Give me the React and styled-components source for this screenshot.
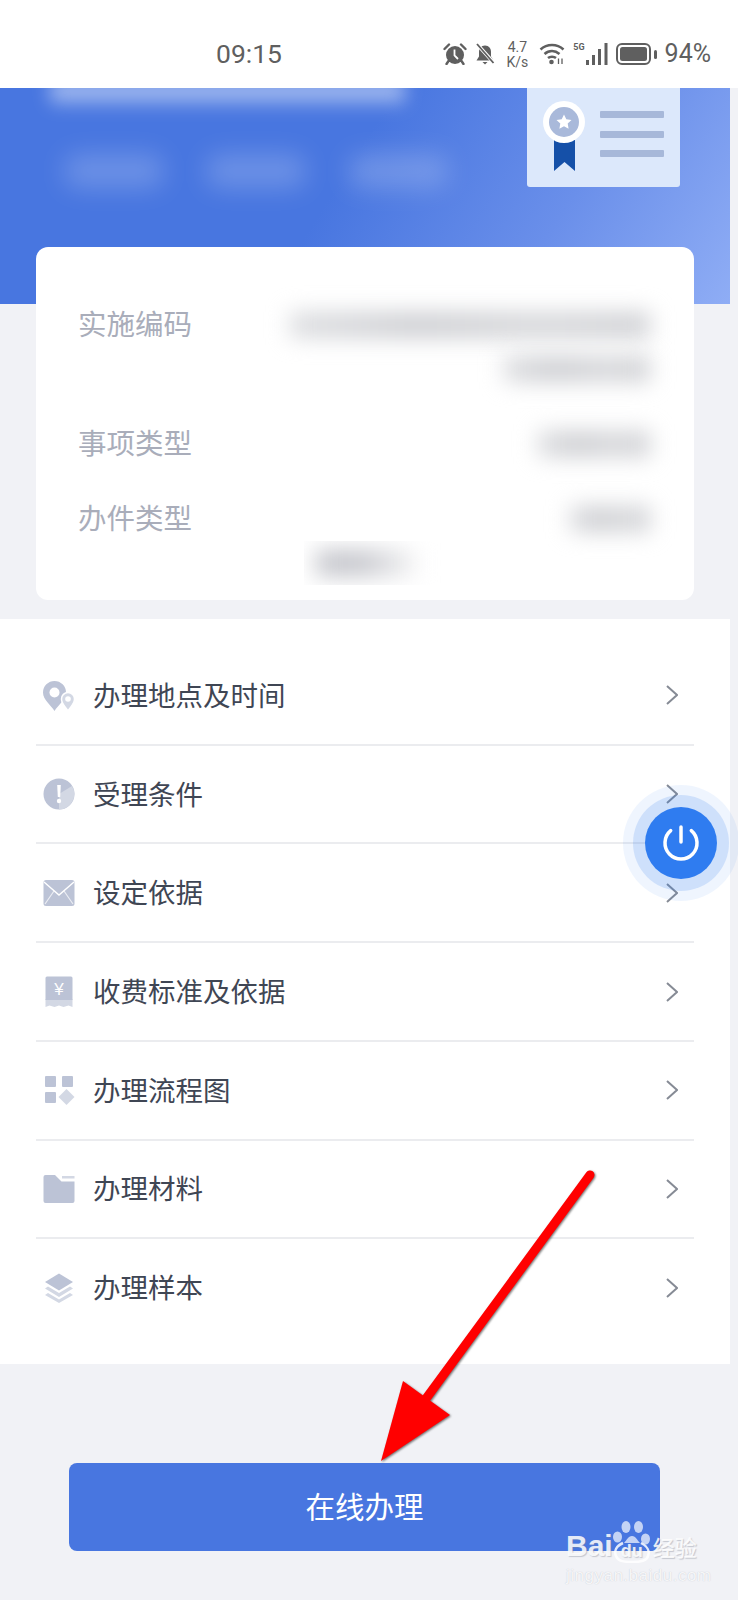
import styled, { createGlobalStyle } from "styled-components"

const GlobalStyle = createGlobalStyle`
  html, body {
    margin: 0;
    padding: 0;
    background: #f1f2f6;
  }
  body {
    font-family: "Noto Sans CJK SC", "Noto Sans", sans-serif;
  }
`

const GREY = "#5f5f5f"
const ICON = "#bcc3d6"
const ICON_LIGHT = "#d3d8e4"

const rows = [
  { label: "办理地点及时间", icon: <PinIcon /> },
  { label: "受理条件", icon: <AlertIcon /> },
  { label: "设定依据", icon: <MailIcon /> },
  { label: "收费标准及依据", icon: <ReceiptIcon /> },
  { label: "办理流程图", icon: <FlowIcon /> },
  { label: "办理材料", icon: <FolderIcon /> },
  { label: "办理样本", icon: <LayersIcon /> },
]

function PinIcon() {
  return (
    <svg width="32" height="32" viewBox="0 0 32 32">
      <path d="M11.500 32 C8 26 0 21 0 13.500 A11.500 11.500 0 0 1 23 13.500 C23 21 15 26 11.500 32 Z" fill={ICON} />
      <circle cx="11.500" cy="13.500" r="5" fill="#fff" />
      <path d="M25 32 C23 28 18.500 25.500 18.500 20 A6.500 6.500 0 0 1 31.500 20 C31.500 25.500 27 28 25 32 Z" fill={ICON_LIGHT} stroke="#fff" strokeWidth="1.500" />
      <circle cx="25" cy="20" r="2.800" fill="#fff" />
    </svg>
  )
}

function AlertIcon() {
  return (
    <svg width="32" height="32" viewBox="0 0 32 32">
      <circle cx="16" cy="16" r="15.500" fill={ICON} />
      <path d="M16 31.500 A15.500 15.500 0 0 0 29 8 L16 16 Z" fill={ICON_LIGHT} />
      <path d="M14.200 7 h3.600 l-.6 12 h-2.400 z" fill="#fff" />
      <circle cx="16" cy="23" r="2.200" fill="#fff" />
    </svg>
  )
}

function MailIcon() {
  return (
    <svg width="32" height="32" viewBox="0 0 32 32">
      <rect x="0.500" y="3" width="31" height="26" rx="2.500" fill={ICON} />
      <path d="M1 5 L16 18 L31 5" fill="none" stroke="#fff" strokeWidth="1.400" />
      <path d="M2 27 L11 14 M30 27 L21 14" stroke="#fff" strokeWidth="1.200" opacity="0.7" />
    </svg>
  )
}

function ReceiptIcon() {
  return (
    <svg width="32" height="32" viewBox="0 0 32 32">
      <path d="M2.500 23 H29.500 V31 l-4 -1.400 -5 1.400 -4.500 -1.400 -4.500 1.400 -5 -1.400 -4 1.400 Z" fill={ICON_LIGHT} />
      <path d="M4 0.500 H28 a1.500 1.500 0 0 1 1.500 1.500 V24 H2.500 V2 A1.500 1.500 0 0 1 4 .5 Z" fill={ICON} />
      <text x="16" y="19" textAnchor="middle" fontSize="17" fontFamily="Liberation Sans, sans-serif" fill="#fff">¥</text>
    </svg>
  )
}

function FlowIcon() {
  return (
    <svg width="32" height="32" viewBox="0 0 32 32">
      <rect x="2" y="2" width="11" height="11" rx="1" fill={ICON} />
      <rect x="19" y="2" width="11" height="11" rx="1" fill={ICON} />
      <rect x="2" y="18" width="11" height="11" rx="1" fill={ICON} />
      <path d="M23.500 15 L31.500 23 L23.500 31 L15.500 23 Z" fill={ICON_LIGHT} />
    </svg>
  )
}

function FolderIcon() {
  return (
    <svg width="32" height="32" viewBox="0 0 32 32">
      <path d="M2.500 2 H12 L18.500 8.500 H31.500 V28 A2 2 0 0 1 29.500 30 H2.500 A2 2 0 0 1 .5 28 V4 A2 2 0 0 1 2.500 2 Z" fill={ICON} />
      <rect x="19" y="3" width="12.500" height="2.500" fill={ICON_LIGHT} />
    </svg>
  )
}

function LayersIcon() {
  return (
    <svg width="32" height="32" viewBox="0 0 32 32">
      <path d="M16 1.500 L30 10 L16 18.500 L2 10 Z" fill={ICON} />
      <path d="M5 14.500 L2 16.500 L16 25 L30 16.500 L27 14.500 L16 21 Z" fill={ICON_LIGHT} />
      <path d="M5 21 L2 23 L16 31 L30 23 L27 21 L16 27.500 Z" fill={ICON_LIGHT} />
    </svg>
  )
}

const App = () => {
  return (
    <Page>
      <GlobalStyle />

      <StatusBar>
        <Clock>09:15</Clock>
        <StatusIcons>
          <svg width="24" height="22" viewBox="0 0 24 22">
            <circle cx="12" cy="12" r="9" fill={GREY} />
            <path d="M1.500 6 L6 1.500 M22.500 6 L18 1.500 M5.500 18 L3.500 21 M18.500 18 L20.500 21" stroke={GREY} strokeWidth="2.400" strokeLinecap="round" />
            <path d="M11.500 6.500 V12.500 L15 16" fill="none" stroke="#fff" strokeWidth="1.800" />
          </svg>
          <svg width="20" height="22" viewBox="0 0 20 22">
            <path d="M10 2.500 C6 2.500 4 5.500 4 9 V13.500 L1.500 17.500 H18.500 L16 13.500 V9 C16 5.500 14 2.500 10 2.500 Z" fill={GREY} />
            <path d="M7.500 19 H12.500 L10 21.500 Z" fill={GREY} />
            <path d="M1.500 .5 L19 20" stroke="#fff" strokeWidth="3.500" />
            <path d="M2 1 L18.500 20" stroke={GREY} strokeWidth="1.800" />
          </svg>
          <Speed>
            <SpeedLine>4.7</SpeedLine>
            <SpeedLine>K/s</SpeedLine>
          </Speed>
          <svg width="26" height="22" viewBox="0 0 26 22">
            <path d="M1.500 6.500 C8 .5 18 .5 24.500 6.500 M5.500 11 C10 7 16 7 20.500 11 M9 15 C11 13.300 15 13.300 17 15" fill="none" stroke={GREY} strokeWidth="2.500" />
            <circle cx="12.500" cy="19" r="2.300" fill={GREY} />
            <path d="M19.500 21 V15.500 M23 21 V15.500" stroke={GREY} strokeWidth="1.300" />
          </svg>
          <SignalGroup>
            <FiveG>5G</FiveG>
            <svg width="23" height="22" viewBox="0 0 23 22">
              <rect x="1" y="17" width="3" height="5" fill={GREY} />
              <rect x="7" y="12" width="3" height="10" fill={GREY} />
              <rect x="13" y="6" width="3" height="16" fill={GREY} />
              <rect x="19.500" y="0" width="3" height="22" fill={GREY} />
            </svg>
          </SignalGroup>
          <svg width="41" height="22" viewBox="0 0 41 22">
            <rect x="1" y="1" width="33" height="20" rx="5" fill="none" stroke={GREY} strokeWidth="2" />
            <rect x="4" y="4" width="27" height="14" rx="2.500" fill={GREY} />
            <rect x="38" y="7" width="3" height="9" rx="1.500" fill={GREY} />
          </svg>
          <Percent>94%</Percent>
        </StatusIcons>
      </StatusBar>

      <Banner>
        <BannerText>
          <TitleBlur />
          <ChipRow>
            <ChipBlur />
            <ChipBlur />
            <ChipBlur />
          </ChipRow>
        </BannerText>
        <svg width="153" height="99" viewBox="0 0 153 99">
          <path d="M0 0 H153 V96 a3 3 0 0 1 -3 3 H3 a3 3 0 0 1 -3 -3 Z" fill="#dce8fb" />
          <path d="M27 52 H48 V83 L37.500 74 L27 83 Z" fill="#1550a8" />
          <circle cx="37" cy="34" r="21" fill="#fff" />
          <circle cx="37" cy="34" r="15" fill="#a9b9da" />
          <path d="M37 26.500 l2.300 4.800 5.200 .7 -3.800 3.600 .9 5.200 -4.600 -2.500 -4.600 2.500 .9 -5.200 -3.800 -3.600 5.200 -.7 Z" fill="#fff" />
          <rect x="73" y="23" width="64" height="7" rx="1" fill="#a7b8d9" />
          <rect x="73" y="43" width="64" height="7" rx="1" fill="#a7b8d9" />
          <rect x="73" y="62" width="64" height="7" rx="1" fill="#a7b8d9" />
        </svg>
      </Banner>

      <InfoCard>
        <InfoRow $tall>
          <InfoLabel>实施编码</InfoLabel>
          <InfoValue>
            <ValueBlur $width={360} />
            <ValueBlur $width={146} />
          </InfoValue>
        </InfoRow>
        <InfoRow>
          <InfoLabel>事项类型</InfoLabel>
          <InfoValue>
            <ValueBlur $width={112} />
          </InfoValue>
        </InfoRow>
        <InfoRow $tall>
          <InfoLabel>办件类型</InfoLabel>
          <InfoValue>
            <ValueBlur $width={80} />
            <ValueClip>
              <ValueBlur $width={100} $fade />
            </ValueClip>
          </InfoValue>
        </InfoRow>
      </InfoCard>

      <MenuList>
        {rows.map((row) => (
          <MenuRow key={row.label}>
            <IconSlot>{row.icon}</IconSlot>
            <MenuLabel>{row.label}</MenuLabel>
            <svg width="12" height="20" viewBox="0 0 12 20">
              <path d="M1 1 L11 10 L1 19" fill="none" stroke="#868b95" strokeWidth="2" />
            </svg>
          </MenuRow>
        ))}
      </MenuList>

      <Footer>
        <ActionButton>在线办理</ActionButton>
      </Footer>

      <FloatButton>
        <svg width="40" height="40" viewBox="0 0 40 40">
          <path d="M30.300 7.700 A16 16 0 1 1 9.700 7.700" fill="none" stroke="#fff" strokeWidth="3.500" strokeLinecap="round" />
          <path d="M20 4 V19" stroke="#fff" strokeWidth="3.500" strokeLinecap="round" />
        </svg>
      </FloatButton>

      <Arrow viewBox="0 0 240 310" width="240" height="310">
        <path d="M225 15 L60 240" stroke="#ff0000" strokeWidth="9" strokeLinecap="round" />
        <path d="M16 301 L38 221 L85 255 Z" fill="#ff0000" />
      </Arrow>

      <Watermark>
        <LogoLine>
          <BaiText>Bai</BaiText>
          <PawMark>
            <svg width="38" height="42" viewBox="0 0 38 42">
              <g fill="#fff" fillOpacity="0.68">
                <ellipse cx="4.500" cy="16" rx="4.500" ry="5.500" />
                <ellipse cx="13" cy="6" rx="4.500" ry="6" />
                <ellipse cx="25.500" cy="6" rx="4.500" ry="6" />
                <ellipse cx="32.500" cy="18" rx="4.500" ry="5.500" />
                <path d="M19 15 C23 15 24 19 27 22 L11 22 C14 19 15 15 19 15 Z" />
              </g>
              <path d="M10 22 C3 25 1 30 3 35 C5 40 10 41 19 41 C28 41 34 40 35 35 C37 30 34 25 28 22" fill="none" stroke="#fff" strokeOpacity="0.85" strokeWidth="2.500" />
            </svg>
            <DuText>du</DuText>
          </PawMark>
          <JingyanText>经验</JingyanText>
        </LogoLine>
        <SiteText>jingyan.baidu.com</SiteText>
      </Watermark>
    </Page>
  )
}

const Page = styled.div`
  position: relative;
  width: 738px;
  height: 1600px;
  overflow: hidden;
  background: #f1f2f6;
`

const StatusBar = styled.div`
  display: flex;
  align-items: center;
  justify-content: space-between;
  height: 88px;
  padding: 20px 27px 0 216px;
  box-sizing: border-box;
  background: #fff;
  color: ${GREY};
  font-family: Roboto, "Liberation Sans", sans-serif;
`

const Clock = styled.div`
  font-size: 26.5px;
  line-height: 32px;
`

const StatusIcons = styled.div`
  display: flex;
  align-items: center;
  gap: 8px;
`

const Speed = styled.div`
  display: flex;
  flex-direction: column;
  align-items: center;
  margin: 0 3px;
`

const SpeedLine = styled.div`
  font-size: 14px;
  line-height: 16.5px;
  margin-bottom: -1px;
`

const SignalGroup = styled.div`
  display: flex;
  align-items: flex-start;
`

const FiveG = styled.span`
  font-size: 9px;
  font-weight: 700;
  line-height: 9px;
`

const Percent = styled.div`
  font-size: 25px;
  line-height: 32px;
`

const Banner = styled.div`
  display: flex;
  justify-content: space-between;
  align-items: flex-start;
  width: 730px;
  height: 216px;
  padding: 0 50px;
  box-sizing: border-box;
  overflow: hidden;
  background: linear-gradient(122deg, #4876e0 46%, #6a8fea 74%, #8fadf5 100%);
`

const BannerText = styled.div`
  display: flex;
  flex-direction: column;
  gap: 48px;
  width: 430px;
`

const TitleBlur = styled.div`
  width: 355px;
  height: 24px;
  margin-top: -6px;
  background: linear-gradient(180deg, rgba(255, 255, 255, 0.7), rgba(255, 255, 255, 0.18));
  filter: blur(9px);
`

const ChipRow = styled.div`
  display: flex;
  gap: 42px;
  padding-left: 14px;
`

const ChipBlur = styled.div`
  flex: none;
  width: 100px;
  height: 34px;
  background: rgba(255, 255, 255, 0.2);
  border-radius: 14px;
  filter: blur(13px);
`

const InfoCard = styled.section`
  position: relative;
  display: flex;
  flex-direction: column;
  gap: 31px;
  width: 658px;
  height: 353px;
  margin: -57px 0 19px 36px;
  padding: 56px 44px 0 42px;
  box-sizing: border-box;
  background: #fff;
  border-radius: 12px;
`

const InfoRow = styled.div`
  display: flex;
  justify-content: space-between;
  height: ${(p) => (p.$tall ? 88 : 44)}px;
`

const InfoLabel = styled.div`
  margin-top: -2px;
  font-size: 28.5px;
  line-height: 44px;
  color: #a9adba;
`

const InfoValue = styled.div`
  display: flex;
  flex-direction: column;
  align-items: flex-end;
  width: 360px;
`

const ValueBlur = styled.div`
  flex: none;
  width: ${(p) => p.$width}px;
  height: 26px;
  margin: 9px 0;
  background: ${(p) =>
    p.$fade
      ? "linear-gradient(90deg, #c4c5cb 0%, #c4c5cb 45%, #f4f4f5 100%)"
      : "linear-gradient(90deg, #dcdde0, #cdced2 35%, #d6d7da 70%, #cfd0d4)"};
  filter: blur(11px);
`

const ValueClip = styled.div`
  align-self: flex-start;
  width: 130px;
  height: 44px;
  margin-left: 14px;
  padding-left: 12px;
  overflow: hidden;
`

const MenuList = styled.div`
  display: flex;
  flex-direction: column;
  width: 730px;
  height: 745px;
  padding: 28px 36px;
  box-sizing: border-box;
  background: #fff;
`

const MenuRow = styled.div`
  display: flex;
  align-items: center;
  flex: 1;
  padding: 0 16px 0 7px;
  border-bottom: 2px solid #ebecef;

  &:last-child {
    border-bottom: none;
  }
`

const IconSlot = styled.div`
  display: flex;
  width: 32px;
  height: 32px;
  margin-right: 18px;
`

const MenuLabel = styled.div`
  flex: 1;
  margin-top: -3px;
  font-size: 27.5px;
  line-height: 40px;
  color: #3f4654;
`

const Footer = styled.div`
  padding: 99px 0 0 69px;
`

const ActionButton = styled.button`
  display: block;
  width: 591px;
  height: 88px;
  padding: 0 0 4px;
  border: none;
  border-radius: 8px;
  background: #4876e0;
  color: #fff;
  font-family: inherit;
  font-size: 29.5px;
`

const FloatButton = styled.div`
  position: absolute;
  left: 645px;
  top: 807px;
  display: flex;
  align-items: center;
  justify-content: center;
  width: 72px;
  height: 72px;
  border-radius: 50%;
  background: #2f7cf0;
  box-shadow: 0 0 0 12px rgba(47, 124, 240, 0.17), 0 0 0 22px rgba(47, 124, 240, 0.08);
`

const Arrow = styled.svg`
  position: absolute;
  left: 365px;
  top: 1160px;
  filter: drop-shadow(1px 1px 1px rgba(0, 0, 0, 0.55));
`

const Watermark = styled.div`
  position: absolute;
  left: 566px;
  top: 1521px;
  display: flex;
  flex-direction: column;
  color: rgba(255, 255, 255, 0.85);
  text-shadow: 1px 1px 1px rgba(130, 135, 150, 0.4);
`

const LogoLine = styled.div`
  display: flex;
  align-items: flex-end;
  height: 42px;
`

const BaiText = styled.span`
  font-family: "Liberation Sans", sans-serif;
  font-size: 30px;
  font-weight: 700;
  line-height: 34px;
`

const PawMark = styled.div`
  position: relative;
  width: 38px;
  height: 42px;
`

const DuText = styled.span`
  position: absolute;
  left: 8px;
  bottom: 2px;
  font-family: "Liberation Sans", sans-serif;
  font-size: 18px;
  font-weight: 700;
  line-height: 20px;
`

const JingyanText = styled.span`
  margin-left: 2px;
  font-size: 22px;
  font-weight: 500;
  line-height: 34px;
`

const SiteText = styled.span`
  margin-top: 3px;
  font-family: "Liberation Sans", sans-serif;
  font-size: 17px;
  line-height: 20px;
  letter-spacing: 0.5px;
  text-shadow: 0 0 1px rgba(130, 135, 150, 0.45);
`

export default App
